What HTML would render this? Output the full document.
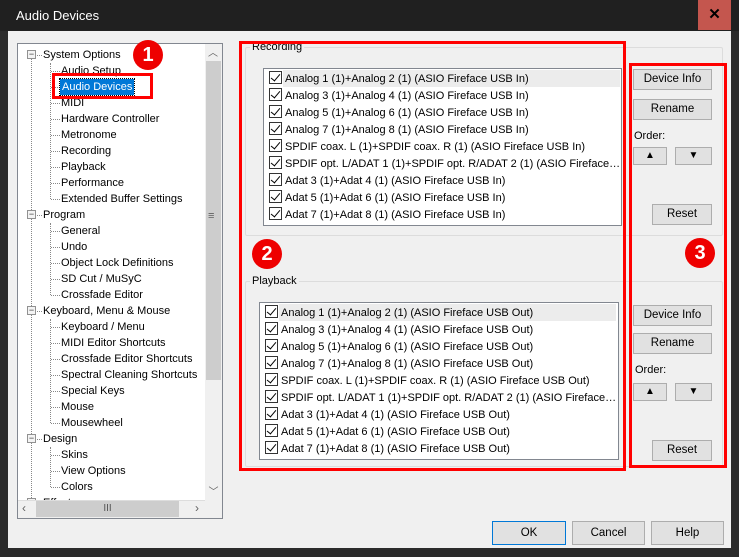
<!DOCTYPE html>
<html><head><style>
*{margin:0;padding:0;box-sizing:border-box}
body{width:739px;height:557px;background:#2b2b2b;font-family:"Liberation Sans",sans-serif;font-size:11px;color:#000;position:relative;overflow:hidden}
.a{position:absolute}
.title{left:0;top:0;width:739px;height:31px;background:#202020;color:#fff;font-size:13px;padding:8px 0 0 16px}
.close{left:698px;top:0;width:33px;height:30px;background:#c4564e;color:#000;font-weight:bold;font-size:15px;text-align:center;line-height:29px}
.client{left:8px;top:31px;width:723px;height:517px;background:#f0f0f0}
.tree{left:17px;top:43px;width:206px;height:476px;background:#fff;border:1px solid #828790;overflow:hidden}
.ti{position:absolute;white-space:nowrap;line-height:16px;height:16px}
.exp{position:absolute;width:9px;height:9px;border:1px solid #919191;background:#f4f4f4;font-size:9px;line-height:6px;text-align:center;color:#333}
.vl{position:absolute;border-left:1px dotted #888}
.hl{position:absolute;border-top:1px dotted #888;height:1px}
.grp{border:1px solid #dcdcdc;border-radius:2px}
.lbl{background:#f0f0f0;padding:0 2px}
.list{background:#fff;border:1px solid #828790}
.row{position:absolute;left:5px;height:17px;line-height:17px;white-space:nowrap}
.cb{display:inline-block;width:13px;height:13px;border:1px solid #333;vertical-align:-2px;margin-right:3px;position:relative;background:#fff}
.cb:after{content:"";position:absolute;left:3px;top:0px;width:4px;height:8px;border:solid #000;border-width:0 1.5px 1.5px 0;transform:rotate(40deg)}
.btn{background:#e1e1e1;border:1px solid #adadad;text-align:center;font-size:11.5px}
.red{border:3px solid #f00}
.badge{width:30px;height:30px;border-radius:50%;background:#e00;color:#fff;font-weight:bold;font-size:20px;text-align:center;line-height:30px}
</style></head><body>
<div class="a title">Audio Devices</div>
<div class="a close">✕</div>
<div class="a client"></div>

<div class="a tree">
  <div class="vl" style="left:13px;top:12px;height:460px"></div>
  <div class="vl" style="left:32px;top:19px;height:136px"></div>
  <div class="vl" style="left:32px;top:179px;height:72px"></div>
  <div class="vl" style="left:32px;top:275px;height:104px"></div>
  <div class="vl" style="left:32px;top:403px;height:40px"></div>
  <div id="tr"></div>
  <div class="a" style="left:187px;top:0;width:17px;height:456px;background:#f0f0f0"></div>
  <div class="a" style="left:188px;top:17px;width:15px;height:319px;background:#cdcdcd"></div>
  <div class="a" style="left:190px;top:0;font-size:10px;color:#606060">︿</div>
  <div class="a" style="left:190px;top:170px;font-size:11px;color:#606060;line-height:4px">≡</div>
  <div class="a" style="left:187px;top:439px;width:17px;height:17px;font-size:10px;color:#606060;text-align:center">﹀</div>
  <div class="a" style="left:0;top:456px;width:204px;height:18px;background:#f0f0f0;border-top:1px solid #ddd"></div>
  <div class="a" style="left:18px;top:457px;width:143px;height:16px;background:#cdcdcd;text-align:center;line-height:16px;font-size:10px;color:#555">III</div>
  <div class="a" style="left:4px;top:457px;color:#606060;font-size:12px">‹</div>
  <div class="a" style="left:177px;top:457px;color:#606060;font-size:12px">›</div>
  <div class="a" style="left:187px;top:456px;width:17px;height:18px;background:#f0f0f0"></div>
</div>
<script>
var items=[["System Options",0],["Audio Setup",1],["Audio Devices",1],["MIDI",1],["Hardware Controller",1],["Metronome",1],["Recording",1],["Playback",1],["Performance",1],["Extended Buffer Settings",1],["Program",0],["General",1],["Undo",1],["Object Lock Definitions",1],["SD Cut / MuSyC",1],["Crossfade Editor",1],["Keyboard, Menu & Mouse",0],["Keyboard / Menu",1],["MIDI Editor Shortcuts",1],["Crossfade Editor Shortcuts",1],["Spectral Cleaning Shortcuts",1],["Special Keys",1],["Mouse",1],["Mousewheel",1],["Design",0],["Skins",1],["View Options",1],["Colors",1],["Effects",0]];
var h="";items.forEach(function(it,i){var y=3+i*16;
if(it[1]==0){h+='<div class="exp" style="left:9px;top:'+(y+3)+'px">−</div><div class="hl" style="left:19px;top:'+(y+8)+'px;width:5px"></div><div class="ti" style="left:25px;top:'+y+'px">'+it[0]+'</div>';}
else{h+='<div class="hl" style="left:33px;top:'+(y+8)+'px;width:9px"></div><div class="ti" style="left:43px;top:'+y+'px;'+(i==2?'background:#0078d7;color:#fff;padding:0 2px;left:42px;outline:1px dotted #000':'')+'">'+it[0]+'</div>';}});
document.getElementById('tr').innerHTML=h;
</script>

<div class="a grp" style="left:245px;top:47px;width:478px;height:189px"></div>
<div class="a lbl" style="left:250px;top:41px">Recording</div>
<div class="a list" style="left:263px;top:68px;width:359px;height:158px" id="rl"></div>
<div class="a grp" style="left:245px;top:281px;width:478px;height:186px"></div>
<div class="a lbl" style="left:250px;top:275px">Playback</div>
<div class="a list" style="left:259px;top:302px;width:360px;height:158px" id="pl"></div>
<script>
function fill(id,s,w){var n=["Analog 1 (1)+Analog 2 (1) (ASIO Fireface USB "+s+")","Analog 3 (1)+Analog 4 (1) (ASIO Fireface USB "+s+")","Analog 5 (1)+Analog 6 (1) (ASIO Fireface USB "+s+")","Analog 7 (1)+Analog 8 (1) (ASIO Fireface USB "+s+")","SPDIF coax. L (1)+SPDIF coax. R (1) (ASIO Fireface USB "+s+")","SPDIF opt. L/ADAT 1 (1)+SPDIF opt. R/ADAT 2 (1) (ASIO Fireface…","Adat 3 (1)+Adat 4 (1) (ASIO Fireface USB "+s+")","Adat 5 (1)+Adat 6 (1) (ASIO Fireface USB "+s+")","Adat 7 (1)+Adat 8 (1) (ASIO Fireface USB "+s+")"];
var h='<div class="a" style="left:19px;top:1px;width:'+w+'px;height:17px;background:#ececec"></div>';n.forEach(function(t,i){h+='<div class="row" style="top:'+(2+i*17)+'px"><span class="cb"></span>'+t+'</div>'});document.getElementById(id).innerHTML=h;}
fill('rl','In',337);fill('pl','Out',337);
</script>

<div class="a btn" style="left:633px;top:69px;width:79px;height:21px;line-height:19px">Device Info</div>
<div class="a btn" style="left:633px;top:99px;width:79px;height:21px;line-height:19px">Rename</div>
<div class="a" style="left:634px;top:130px">Order:</div>
<div class="a btn" style="left:633px;top:147px;width:34px;height:18px;line-height:16px;font-size:10px">▲</div>
<div class="a btn" style="left:675px;top:147px;width:37px;height:18px;line-height:16px;font-size:10px">▼</div>
<div class="a btn" style="left:652px;top:204px;width:60px;height:21px;line-height:19px">Reset</div>
<div class="a btn" style="left:633px;top:305px;width:79px;height:21px;line-height:19px">Device Info</div>
<div class="a btn" style="left:633px;top:333px;width:79px;height:21px;line-height:19px">Rename</div>
<div class="a" style="left:635px;top:364px">Order:</div>
<div class="a btn" style="left:633px;top:383px;width:34px;height:18px;line-height:16px;font-size:10px">▲</div>
<div class="a btn" style="left:675px;top:383px;width:37px;height:18px;line-height:16px;font-size:10px">▼</div>
<div class="a btn" style="left:652px;top:440px;width:60px;height:21px;line-height:19px">Reset</div>

<div class="a btn" style="left:492px;top:521px;width:74px;height:24px;line-height:22px;border-color:#0078d7">OK</div>
<div class="a btn" style="left:572px;top:521px;width:73px;height:24px;line-height:22px">Cancel</div>
<div class="a btn" style="left:651px;top:521px;width:73px;height:24px;line-height:22px">Help</div>

<div class="a red" style="left:52px;top:73px;width:101px;height:26px"></div>
<div class="a red" style="left:239px;top:41px;width:387px;height:430px"></div>
<div class="a red" style="left:629px;top:63px;width:98px;height:405px"></div>
<div class="a badge" style="left:133px;top:40px">1</div>
<div class="a badge" style="left:252px;top:239px">2</div>
<div class="a badge" style="left:685px;top:238px">3</div>
</body></html>
